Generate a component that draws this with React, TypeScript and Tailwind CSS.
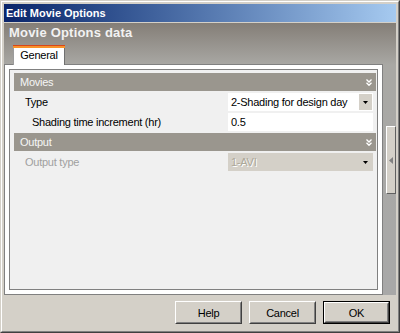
import React from "react";

const UI = "font-['Liberation_Sans',Arial,sans-serif]";

function Chevrons() {
  return (
    <svg width="6" height="7" viewBox="0 0 6 7" className="shrink-0">
      <polyline points="0.5,0.5 3,3 5.5,0.5" fill="none" stroke="#ffffff" strokeWidth="1.3" />
      <polyline points="0.5,3.8 3,6.3 5.5,3.8" fill="none" stroke="#ffffff" strokeWidth="1.3" />
    </svg>
  );
}

function DownArrow() {
  return (
    <svg width="5" height="3" viewBox="0 0 5 3">
      <polygon points="0,0 5,0 2.5,3" fill="#000000" />
    </svg>
  );
}

function SectionHeader({ title }: { title: string }) {
  return (
    <div className="h-[18px] bg-[#9a968e] flex items-center justify-between pl-[6px] pr-[4px] text-[#f6f6f6] leading-[18px]">
      <span>{title}</span>
      <Chevrons />
    </div>
  );
}

function Row({ label, indent, disabled, children }: { label: string; indent?: boolean; disabled?: boolean; children: React.ReactNode }) {
  return (
    <div className="h-[18px] flex items-center pr-[3px]">
      <div className={(indent ? "pl-[18px]" : "pl-[11px]") + " w-[214px] shrink-0 leading-[18px] " + (disabled ? "text-[#a0a0a0]" : "text-black")}>
        {label}
      </div>
      <div className="flex-1 h-full">{children}</div>
    </div>
  );
}

function Button({ label, def }: { label: string; def?: boolean }) {
  return (
    <div className={"w-[67px] h-[23px] " + (def ? "border border-black" : "")}>
      <div className="h-full border border-t-white border-l-white border-r-[#404040] border-b-[#404040]">
        <div className="h-full border border-t-[#d4d0c8] border-l-[#d4d0c8] border-r-[#808080] border-b-[#808080] flex items-center justify-center text-black leading-[14px]">
          {label}
        </div>
      </div>
    </div>
  );
}

export default function App() {
  return (
    <div className={UI + " text-[11px] tracking-[-0.25px] w-[400px] h-[333px] bg-[#d4d0c8] border border-t-[#d4d0c8] border-l-[#d4d0c8] border-r-[#404040] border-b-[#404040]"}>
      <div className="h-full border border-t-white border-l-white border-r-[#808080] border-b-[#808080] p-[2px] flex flex-col">
        {/* title bar */}
        <div className="h-[18px] shrink-0 bg-gradient-to-r from-[#0a246a] to-[#a6caf0] pl-[2px] pt-[1px] text-white font-bold leading-[17px] tracking-normal">
          Edit Movie Options
        </div>
        <div className="h-px shrink-0" />

        {/* gray work area */}
        <div className="flex-1 flex bg-[linear-gradient(to_bottom,#847e77_0px,#a9a8a4_42px,#a8a8a8_100%)]">
          <div className="w-[379px] shrink-0 flex flex-col">
            <div className="h-[22px] shrink-0 pl-[5px] pt-[2px] text-[13px] font-bold text-[#f2f2f2] leading-[16px] tracking-[0.2px]">
              Movie Options data
            </div>
            <div className="flex shrink-0">
              <div className="ml-[9px] w-[52px] h-[20px] -mb-px relative z-10 flex flex-col">
                <div className="h-px bg-[#d8461a]" />
                <div className="h-[2px] bg-[#f8922a]" />
                <div className="flex-1 bg-white border-l border-l-[#9c9c9c] border-r border-r-[#707070] text-black text-center leading-[14px]">
                  General
                </div>
              </div>
            </div>
            <div className="flex-1 border border-[#808080] bg-white p-[4px] flex">
              <div className="flex-1 border border-[#808080] bg-[#f0f0f0] pt-[3px] pl-[4px] pr-[1px] flex flex-col gap-[2px]">
                <SectionHeader title="Movies" />
                <Row label="Type">
                  <div className="h-full bg-white flex items-center justify-between pl-[3px] pr-px">
                    <span className="leading-[18px]">2-Shading for design day</span>
                    <div className="w-[13px] h-[16px] bg-[#d4d0c8] flex items-center justify-center">
                      <DownArrow />
                    </div>
                  </div>
                </Row>
                <Row label="Shading time increment (hr)" indent>
                  <div className="h-full bg-white flex items-center pl-[3px] leading-[18px]">0.5</div>
                </Row>
                <SectionHeader title="Output" />
                <Row label="Output type" disabled>
                  <div className="h-full bg-[#d4d0c8] flex items-center justify-between pl-[3px] pr-[5px]">
                    <span className="leading-[18px] text-[#aca899] [text-shadow:1px_1px_0_#ffffff]">1-AVI</span>
                    <DownArrow />
                  </div>
                </Row>
              </div>
            </div>
          </div>

          {/* splitter column */}
          <div className="flex-1 flex flex-col pl-[3px]">
            <div className="mt-[103px] w-[10px] h-[68px] bg-[#d4d0c8] border border-t-white border-l-white border-r-[#606060] border-b-[#606060] flex items-center justify-center">
              <svg width="4" height="7" viewBox="0 0 4 7">
                <polygon points="4,0 4,7 0,3.5" fill="#808080" />
              </svg>
            </div>
          </div>
        </div>

        {/* button bar */}
        <div className="h-[34px] shrink-0 flex justify-end gap-[7px] pt-[6px] pr-[6px]">
          <Button label="Help" />
          <Button label="Cancel" />
          <Button label="OK" def />
        </div>
      </div>
    </div>
  );
}
